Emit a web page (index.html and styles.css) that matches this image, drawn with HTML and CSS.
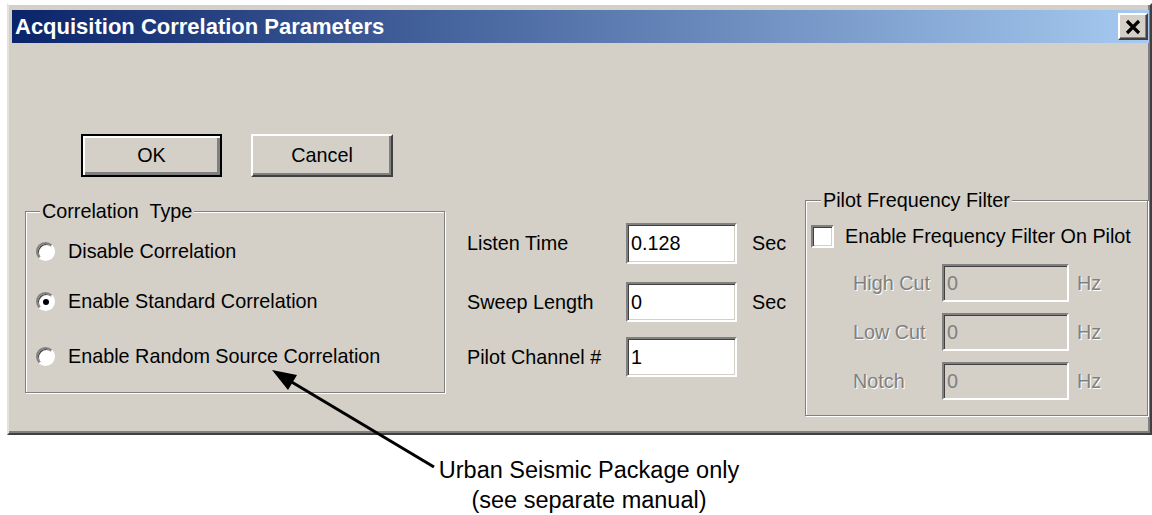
FILE: index.html
```html
<!DOCTYPE html>
<html lang="en">

<head>
    <meta charset="UTF-8">
    <meta name="viewport" content="width=device-width, initial-scale=1.0">
    <title>Acquisition Correlation Parameters</title>
    <link rel="stylesheet" href="styles.css">
</head>

<body>
    <div class="window">
        <div class="titlebar">
            <span class="title">Acquisition Correlation Parameters</span>
            <button class="close">
                <svg width="18" height="16" viewBox="0 0 18 16">
                    <path d="M3 2 L15 14 M15 2 L3 14" stroke="#000" stroke-width="3.2" fill="none" />
                </svg>
            </button>
        </div>

        <div class="buttons">
            <button class="btn default">OK</button>
            <button class="btn">Cancel</button>
        </div>

        <div class="main">
            <fieldset class="group corr">
                <legend>Correlation&nbsp; Type</legend>
                <label class="opt first"><span class="radio"></span>Disable Correlation</label>
                <label class="opt second"><span class="radio on"></span>Enable Standard Correlation</label>
                <label class="opt third"><span class="radio"></span>Enable Random Source Correlation</label>
            </fieldset>

            <div class="fields">
                <div class="field-row r1">
                    <span class="lbl">Listen Time</span>
                    <input class="edit" type="text" value="0.128">
                    <span class="unit">Sec</span>
                </div>
                <div class="field-row r2">
                    <span class="lbl">Sweep Length</span>
                    <input class="edit" type="text" value="0">
                    <span class="unit">Sec</span>
                </div>
                <div class="field-row r3">
                    <span class="lbl">Pilot Channel #</span>
                    <input class="edit" type="text" value="1">
                </div>
            </div>

            <fieldset class="group pilot">
                <legend>Pilot Frequency Filter</legend>
                <label class="opt check-row"><span class="check"></span>Enable Frequency Filter On Pilot</label>
                <div class="filter-row f1">
                    <span class="lbl off">High Cut</span>
                    <input class="edit small" type="text" value="0" disabled>
                    <span class="unit off">Hz</span>
                </div>
                <div class="filter-row f2">
                    <span class="lbl off">Low Cut</span>
                    <input class="edit small" type="text" value="0" disabled>
                    <span class="unit off">Hz</span>
                </div>
                <div class="filter-row f3">
                    <span class="lbl off">Notch</span>
                    <input class="edit small" type="text" value="0" disabled>
                    <span class="unit off">Hz</span>
                </div>
            </fieldset>
        </div>
    </div>

    <div class="note">Urban Seismic Package only<br>(see separate manual)</div>

    <!-- callout arrow pointing at the random source option -->
    <svg class="arrow" width="1152" height="515" viewBox="0 0 1152 515">
        <line x1="434" y1="467" x2="290" y2="381" stroke="#000" stroke-width="3" />
        <polygon points="272,370 297,375 288,390" fill="#000" />
    </svg>
</body>

</html>
```

FILE: styles.css
```css
* {
    box-sizing: border-box;
    margin: 0;
    padding: 0;
}

body {
    position: relative;
    width: 1152px;
    height: 515px;
    overflow: hidden;
    background-color: #fff;
    font-family: "Liberation Sans", Arial, sans-serif;
    font-size: 19.8px;
    color: #000;
}

.window {
    width: 1145px;
    height: 432px;
    margin: 3px 0 0 7px;
    padding: 5px 1px 1px 3px;
    background-color: #d4d0c8;
    border: 2px solid;
    border-color: #fff #404040 #404040 #e4e2dc;
    box-shadow: inset -2px -2px #808080;
}

.titlebar {
    display: flex;
    align-items: center;
    justify-content: space-between;
    height: 33px;
    padding: 0 1px 0 3px;
    background: linear-gradient(to right, #0a246a, #a6caf0);
}

.title {
    color: #fff;
    font-weight: bold;
    font-size: 22px;
}

.close {
    display: flex;
    align-items: center;
    justify-content: center;
    width: 30px;
    height: 27px;
    background-color: #d4d0c8;
    border: 2px solid;
    border-color: #fff #404040 #404040 #fff;
    box-shadow: inset -1px -1px #808080;
}

.buttons {
    display: flex;
    gap: 29px;
    margin-top: 91px;
    padding-left: 69px;
}

.btn {
    width: 142px;
    height: 43px;
    background-color: #d4d0c8;
    font: inherit;
    color: #000;
    border: 2px solid;
    border-color: #fff #404040 #404040 #fff;
    box-shadow: inset -2px -2px #808080;
}

.btn.default {
    width: 141px;
    border: 2px solid #000;
    box-shadow: inset 2px 2px #fff, inset -3px -3px #808080;
}

.main {
    display: flex;
    align-items: flex-start;
}

.group {
    min-inline-size: 0;
    border: 1px solid #808080;
    box-shadow: inset 1px 1px #fff, 1px 1px #fff;
}

.group legend {
    padding: 0 2px;
    line-height: 22px;
    background-color: #d4d0c8;
}

.corr {
    width: 420px;
    height: 193px;
    margin: 23px 0 0 13px;
    padding: 0 0 0 10px;
}

.corr legend {
    margin-left: 4px;
}

.opt {
    display: flex;
    align-items: center;
    height: 24px;
}

.corr .first {
    margin-top: 17px;
}

.corr .second {
    margin-top: 26px;
}

.corr .third {
    margin-top: 31px;
}

.radio {
    position: relative;
    width: 19px;
    height: 19px;
    margin-right: 13px;
    border-radius: 50%;
    background-color: #fff;
    border: 2px solid;
    border-color: #808080 #fff #fff #808080;
    box-shadow: inset 1px 1px #404040;
}

.radio.on::after {
    content: "";
    position: absolute;
    left: 5px;
    top: 5px;
    width: 6px;
    height: 6px;
    border-radius: 50%;
    background-color: #000;
}

.fields {
    width: 338px;
    margin: 46px 0 0 22px;
}

.field-row {
    display: flex;
    align-items: center;
    height: 41px;
}

.field-row .lbl {
    width: 159px;
}

.field-row.r2 {
    margin-top: 18px;
    height: 40px;
}

.field-row.r3 {
    margin-top: 15px;
    height: 40px;
}

.edit {
    width: 111px;
    height: 100%;
    padding: 0 3px;
    font: inherit;
    color: #000;
    background-color: #fff;
    border: 2px solid;
    border-color: #808080 #fff #fff #808080;
    box-shadow: inset 1px 1px #404040, inset -1px -1px #d4d0c8;
    outline: none;
}

.unit {
    margin-left: 15px;
}

.pilot {
    width: 343px;
    height: 227px;
    margin-top: 12px;
    padding: 0 0 0 5px;
}

.pilot legend {
    margin-left: 10px;
}

.check-row {
    margin-top: 13px;
}

.check {
    width: 23px;
    height: 23px;
    margin-right: 11px;
    background-color: #fff;
    border: 2px solid;
    border-color: #808080 #fff #fff #808080;
    box-shadow: inset 1px 1px #404040, inset -1px -1px #d4d0c8;
}

.filter-row {
    display: flex;
    align-items: center;
    height: 38px;
    padding-left: 42px;
}

.filter-row .lbl {
    width: 89px;
}

.filter-row.f1 {
    margin-top: 16px;
}

.filter-row.f2,
.filter-row.f3 {
    margin-top: 11px;
}

.edit.small {
    width: 127px;
    color: #808080;
    background-color: #d4d0c8;
}

.filter-row .unit {
    margin-left: 8px;
}

.off {
    color: #808080;
    text-shadow: 1px 1px #fff;
}

.note {
    width: 400px;
    margin: 20px 0 0 389px;
    text-align: center;
    font-size: 23.5px;
    line-height: 30px;
}

.arrow {
    position: absolute;
    left: 0;
    top: 0;
    pointer-events: none;
}
```
